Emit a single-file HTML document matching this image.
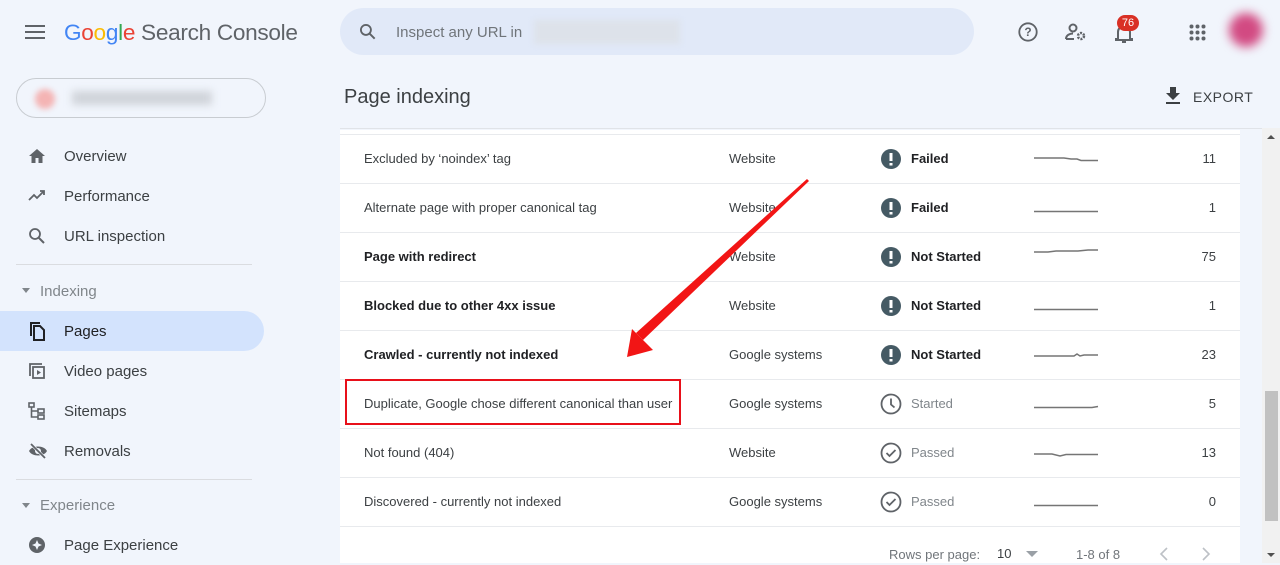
<!DOCTYPE html>
<html><head><meta charset="utf-8"><style>
*{box-sizing:border-box;margin:0;padding:0}
body{width:1280px;height:563px;overflow:hidden;background:#f1f5fc;font-family:"Liberation Sans",Arial,sans-serif;position:relative;color:#202124}
.abs{position:absolute}
.nav{position:absolute;left:0;height:40px;display:flex;align-items:center;font-size:15px;color:#3c4043}
.nav svg{position:absolute;left:28px}
.nav span{position:absolute;left:64px;white-space:nowrap}
.row{position:absolute;left:340px;width:900px;height:49px;border-bottom:1px solid #e8eaed;font-size:13px;color:#3c4043}
.row div{position:absolute;top:0;line-height:48px;white-space:nowrap}
.c1{left:24px}.c2{left:389px}.c3{left:571px}.c5{right:24px;text-align:right}
.ic{position:absolute;left:540px;top:13px}
.b{font-weight:bold;color:#202124}
.g{color:#80868b}
</style></head><body>
<svg class="abs" style="left:25px;top:25px" width="21" height="15"><rect y="0" width="20" height="2" fill="#5f6368"/><rect y="6" width="20" height="2" fill="#5f6368"/><rect y="12" width="20" height="2" fill="#5f6368"/></svg>
<div class="abs" style="left:64px;top:20px;font-size:22.6px;letter-spacing:-0.3px;white-space:nowrap"><span style="color:#4285f4">G</span><span style="color:#ea4335">o</span><span style="color:#fbbc05">o</span><span style="color:#4285f4">g</span><span style="color:#34a853">l</span><span style="color:#ea4335">e</span><span style="color:#5f6368"> Search Console</span></div>
<div class="abs" style="left:340px;top:8px;width:634px;height:47px;border-radius:24px;background:#e1e9f8"></div>
<svg class="abs" style="left:358px;top:22px" width="20" height="20" viewBox="0 0 24 24"><circle cx="9.5" cy="9.5" r="6" fill="none" stroke="#5f6368" stroke-width="2.2"/><path d="M14 14l6 6" stroke="#5f6368" stroke-width="2.4"/></svg>
<div class="abs" style="left:396px;top:24px;font-size:15px;color:#70757a">Inspect any URL in</div>
<div class="abs" style="left:534px;top:20px;width:146px;height:24px;background:#dde2ea;filter:blur(3px)"></div>
<svg class="abs" style="left:1017px;top:21px" width="22" height="22" viewBox="0 0 24 24"><circle cx="12" cy="12" r="9.5" fill="none" stroke="#5f6368" stroke-width="2"/><text x="12" y="16.5" text-anchor="middle" font-size="13" font-weight="bold" fill="#5f6368" font-family="Liberation Sans">?</text></svg>
<svg class="abs" style="left:1065px;top:22px" width="22" height="20" viewBox="0 0 22 20"><circle cx="8" cy="6" r="3.5" fill="none" stroke="#5f6368" stroke-width="2"/><path d="M1 17c0-4 4-5.5 7-5.5" fill="none" stroke="#5f6368" stroke-width="2"/><path d="M1 17h8" stroke="#5f6368" stroke-width="2"/><circle cx="16" cy="14" r="3" fill="none" stroke="#5f6368" stroke-width="2.5" stroke-dasharray="2 1.2"/></svg>
<svg class="abs" style="left:1114px;top:22px" width="20" height="22" viewBox="0 0 20 22"><path d="M4 17V10a6 6 0 0 1 12 0v7h2v1H2v-1z" fill="none" stroke="#5f6368" stroke-width="2"/><rect x="8" y="19" width="4" height="2" fill="#5f6368"/></svg>
<div class="abs" style="left:1117px;top:15px;width:22px;height:16px;border-radius:8px;background:#d93025;color:#fff;font-size:11px;text-align:center;line-height:16px">76</div>
<svg class="abs" style="left:1189px;top:24px" width="18" height="18"><g fill="#5f6368"><circle cx="2.5" cy="2.5" r="2"/><circle cx="8.5" cy="2.5" r="2"/><circle cx="14.5" cy="2.5" r="2"/><circle cx="2.5" cy="8.5" r="2"/><circle cx="8.5" cy="8.5" r="2"/><circle cx="14.5" cy="8.5" r="2"/><circle cx="2.5" cy="14.5" r="2"/><circle cx="8.5" cy="14.5" r="2"/><circle cx="14.5" cy="14.5" r="2"/></g></svg>
<div class="abs" style="left:1229px;top:13px;width:34px;height:34px;border-radius:50%;background:#d24a82;filter:blur(5px)"></div>
<div class="abs" style="left:16px;top:78px;width:250px;height:40px;border:1px solid #c8ccd1;border-radius:20px;overflow:hidden"><div style="position:absolute;left:18px;top:10px;width:20px;height:20px;border-radius:50%;background:#f4b4b4;filter:blur(3px)"></div><div style="position:absolute;left:55px;top:12px;width:140px;height:14px;background:#d0d4da;filter:blur(4px)"></div></div>
<div class="nav" style="top:136px"><svg width="18" height="16" viewBox="0 0 18 16"><path d="M9 1L1 8h2.5v7h4v-5h3v5h4V8H17z" fill="#5f6368"/></svg><span>Overview</span></div>
<div class="nav" style="top:176px"><svg width="18" height="12" viewBox="0 0 18 12"><path d="M1 10l5-5 3 3 7-7M12 1h4v4" fill="none" stroke="#5f6368" stroke-width="1.8"/></svg><span>Performance</span></div>
<div class="nav" style="top:216px"><svg width="18" height="18" viewBox="0 0 18 18"><circle cx="7" cy="7" r="5" fill="none" stroke="#5f6368" stroke-width="1.8"/><path d="M11 11l5 5" stroke="#5f6368" stroke-width="2"/></svg><span>URL inspection</span></div>
<div class="abs" style="left:16px;top:264px;width:236px;height:1px;background:#dadce0"></div>
<div class="abs" style="left:22px;top:288px;border-left:4px solid transparent;border-right:4px solid transparent;border-top:5px solid #80868b"></div>
<div class="abs" style="left:40px;top:283px;font-size:15px;color:#80868b">Indexing</div>
<div class="abs" style="left:0;top:311px;width:264px;height:40px;background:#d3e3fd;border-radius:0 20px 20px 0"></div>
<div class="nav" style="top:311px"><svg width="18" height="20" viewBox="0 0 18 20"><path d="M3 15V2h9" fill="none" stroke="#202124" stroke-width="2"/><path d="M6 5h6l4 4v10H6z" fill="none" stroke="#202124" stroke-width="2"/></svg><span style="color:#202124">Pages</span></div>
<div class="nav" style="top:351px"><svg width="18" height="18" viewBox="0 0 18 18"><path d="M2 14V2h12" fill="none" stroke="#5f6368" stroke-width="1.8"/><rect x="5" y="5" width="11" height="11" fill="none" stroke="#5f6368" stroke-width="1.8"/><path d="M9 8v5l4-2.5z" fill="#5f6368"/></svg><span>Video pages</span></div>
<div class="nav" style="top:391px"><svg width="18" height="18" viewBox="0 0 18 18"><g fill="none" stroke="#5f6368" stroke-width="1.6"><rect x="1" y="1" width="5" height="4"/><rect x="10" y="7" width="6" height="4"/><rect x="10" y="13" width="6" height="4"/><path d="M3.5 5v10h6.5M3.5 9h6.5"/></g></svg><span>Sitemaps</span></div>
<div class="nav" style="top:431px"><svg width="20" height="16" viewBox="0 0 20 16"><path d="M1 8c3-6 15-6 18 0-3 6-15 6-18 0z" fill="#5f6368"/><circle cx="10" cy="8" r="3" fill="#f1f5fc"/><path d="M3 1l14 14" stroke="#f1f5fc" stroke-width="3"/><path d="M3 1l14 14" stroke="#5f6368" stroke-width="1.8"/></svg><span>Removals</span></div>
<div class="abs" style="left:16px;top:479px;width:236px;height:1px;background:#dadce0"></div>
<div class="abs" style="left:22px;top:503px;border-left:4px solid transparent;border-right:4px solid transparent;border-top:5px solid #80868b"></div>
<div class="abs" style="left:40px;top:497px;font-size:15px;color:#80868b">Experience</div>
<div class="nav" style="top:525px"><svg width="18" height="18" viewBox="0 0 18 18"><circle cx="9" cy="9" r="8" fill="#5f6368"/><path d="M9 4l1.5 3.5L14 9l-3.5 1.5L9 14l-1.5-3.5L4 9l3.5-1.5z" fill="#f1f5fc"/></svg><span>Page Experience</span></div>
<div class="abs" style="left:344px;top:86px;font-size:20px;color:#3c4043">Page indexing</div>
<svg class="abs" style="left:1164px;top:86px" width="18" height="19" viewBox="0 0 18 19"><path d="M6 1h6v6h4l-7 7-7-7h4z" fill="#3c4043"/><rect x="2" y="16" width="14" height="2" fill="#3c4043"/></svg>
<div class="abs" style="left:1193px;top:89px;font-size:14px;color:#3c4043;letter-spacing:0.5px">EXPORT</div>
<div class="abs" style="left:340px;top:128px;width:940px;height:1px;background:#e0e3e8"></div>
<div class="abs" style="left:340px;top:130px;width:900px;height:433px;background:#fff"></div>
<div class="abs" style="left:1262px;top:128px;width:18px;height:435px;background:#f1f1f1"></div>
<div class="abs" style="left:1265px;top:391px;width:13px;height:130px;background:#c1c1c1"></div>
<div class="abs" style="left:1267px;top:135px;border-left:4px solid transparent;border-right:4px solid transparent;border-bottom:4px solid #505050"></div>
<div class="abs" style="left:1267px;top:553px;border-left:4px solid transparent;border-right:4px solid transparent;border-top:4px solid #505050"></div>
<div class="abs" style="left:340px;top:134px;width:900px;height:1px;background:#e8eaed"></div>

<div class="row" style="top:135px"><div class="c1">Excluded by ‘noindex’ tag</div><div class="c2">Website</div><svg class="ic" width="22" height="22"><circle cx="11" cy="11" r="10" fill="#455a64"/><rect x="9.5" y="5" width="3" height="8" fill="#fff"/><rect x="9.5" y="15" width="3" height="2.5" fill="#fff"/></svg><div class="c3 b">Failed</div><svg class="abs" style="left:694px;top:16px" width="66" height="14"><path d="M0 7h30l7 1h6l4 1.5h17" fill="none" stroke="#757575" stroke-width="1.5"/></svg><div class="c5">11</div></div>
<div class="row" style="top:184px"><div class="c1">Alternate page with proper canonical tag</div><div class="c2">Website</div><svg class="ic" width="22" height="22"><circle cx="11" cy="11" r="10" fill="#455a64"/><rect x="9.5" y="5" width="3" height="8" fill="#fff"/><rect x="9.5" y="15" width="3" height="2.5" fill="#fff"/></svg><div class="c3 b">Failed</div><svg class="abs" style="left:694px;top:16px" width="66" height="14"><path d="M0 11.5h64" fill="none" stroke="#757575" stroke-width="1.5"/></svg><div class="c5">1</div></div>
<div class="row" style="top:233px"><div class="c1 b">Page with redirect</div><div class="c2">Website</div><svg class="ic" width="22" height="22"><circle cx="11" cy="11" r="10" fill="#455a64"/><rect x="9.5" y="5" width="3" height="8" fill="#fff"/><rect x="9.5" y="15" width="3" height="2.5" fill="#fff"/></svg><div class="c3 b">Not Started</div><svg class="abs" style="left:694px;top:10px" width="66" height="14"><path d="M0 9h14l8-1h22l10-1h10" fill="none" stroke="#757575" stroke-width="1.5"/></svg><div class="c5">75</div></div>
<div class="row" style="top:282px"><div class="c1 b">Blocked due to other 4xx issue</div><div class="c2">Website</div><svg class="ic" width="22" height="22"><circle cx="11" cy="11" r="10" fill="#455a64"/><rect x="9.5" y="5" width="3" height="8" fill="#fff"/><rect x="9.5" y="15" width="3" height="2.5" fill="#fff"/></svg><div class="c3 b">Not Started</div><svg class="abs" style="left:694px;top:16px" width="66" height="14"><path d="M0 11.5h64" fill="none" stroke="#757575" stroke-width="1.5"/></svg><div class="c5">1</div></div>
<div class="row" style="top:331px"><div class="c1 b">Crawled - currently not indexed</div><div class="c2">Google systems</div><svg class="ic" width="22" height="22"><circle cx="11" cy="11" r="10" fill="#455a64"/><rect x="9.5" y="5" width="3" height="8" fill="#fff"/><rect x="9.5" y="15" width="3" height="2.5" fill="#fff"/></svg><div class="c3 b">Not Started</div><svg class="abs" style="left:694px;top:16px" width="66" height="14"><path d="M0 9h40l3-2 3 2 4-1h14" fill="none" stroke="#757575" stroke-width="1.5"/></svg><div class="c5">23</div></div>
<div class="row" style="top:380px"><div class="c1">Duplicate, Google chose different canonical than user</div><div class="c2">Google systems</div><svg class="ic" width="22" height="22"><circle cx="11" cy="11" r="9.5" fill="none" stroke="#5f6368" stroke-width="1.8"/><path d="M11 5.5v6l3.5 3" fill="none" stroke="#5f6368" stroke-width="1.8"/></svg><div class="c3 g">Started</div><svg class="abs" style="left:694px;top:16px" width="66" height="14"><path d="M0 11.5h58l6-1" fill="none" stroke="#757575" stroke-width="1.5"/></svg><div class="c5">5</div></div>
<div class="row" style="top:429px"><div class="c1">Not found (404)</div><div class="c2">Website</div><svg class="ic" width="22" height="22"><circle cx="11" cy="11" r="9.5" fill="none" stroke="#5f6368" stroke-width="1.8"/><path d="M6.5 11l3 3 6-6" fill="none" stroke="#5f6368" stroke-width="1.8"/></svg><div class="c3 g">Passed</div><svg class="abs" style="left:694px;top:16px" width="66" height="14"><path d="M0 9h18l8 2 6-1.5h32" fill="none" stroke="#757575" stroke-width="1.5"/></svg><div class="c5">13</div></div>
<div class="row" style="top:478px"><div class="c1">Discovered - currently not indexed</div><div class="c2">Google systems</div><svg class="ic" width="22" height="22"><circle cx="11" cy="11" r="9.5" fill="none" stroke="#5f6368" stroke-width="1.8"/><path d="M6.5 11l3 3 6-6" fill="none" stroke="#5f6368" stroke-width="1.8"/></svg><div class="c3 g">Passed</div><svg class="abs" style="left:694px;top:16px" width="66" height="14"><path d="M0 11.5h64" fill="none" stroke="#757575" stroke-width="1.5"/></svg><div class="c5">0</div></div>

<div class="abs" style="left:889px;top:547px;font-size:13px;color:#70757a">Rows per page:</div>
<div class="abs" style="left:997px;top:546px;font-size:13px;color:#3c4043">10</div>
<div class="abs" style="left:1026px;top:551px;border-left:6px solid transparent;border-right:6px solid transparent;border-top:6px solid #9aa0a6"></div>
<div class="abs" style="left:1076px;top:547px;font-size:13px;color:#70757a">1-8 of 8</div>
<svg class="abs" style="left:1157px;top:546px" width="60" height="16"><path d="M10 2l-6 6 6 6M46 2l6 6-6 6" fill="none" stroke="#bdc1c6" stroke-width="1.6"/></svg>

<div class="abs" style="left:345px;top:379px;width:336px;height:46px;border:2px solid #e8101a"></div>
<svg class="abs" style="left:0;top:0" width="1280" height="563"><polygon points="807,179 809,181 643,340 636,333" fill="#f21515"/><polygon points="627,357 632,329 653,350" fill="#f21515"/></svg>
</body></html>
